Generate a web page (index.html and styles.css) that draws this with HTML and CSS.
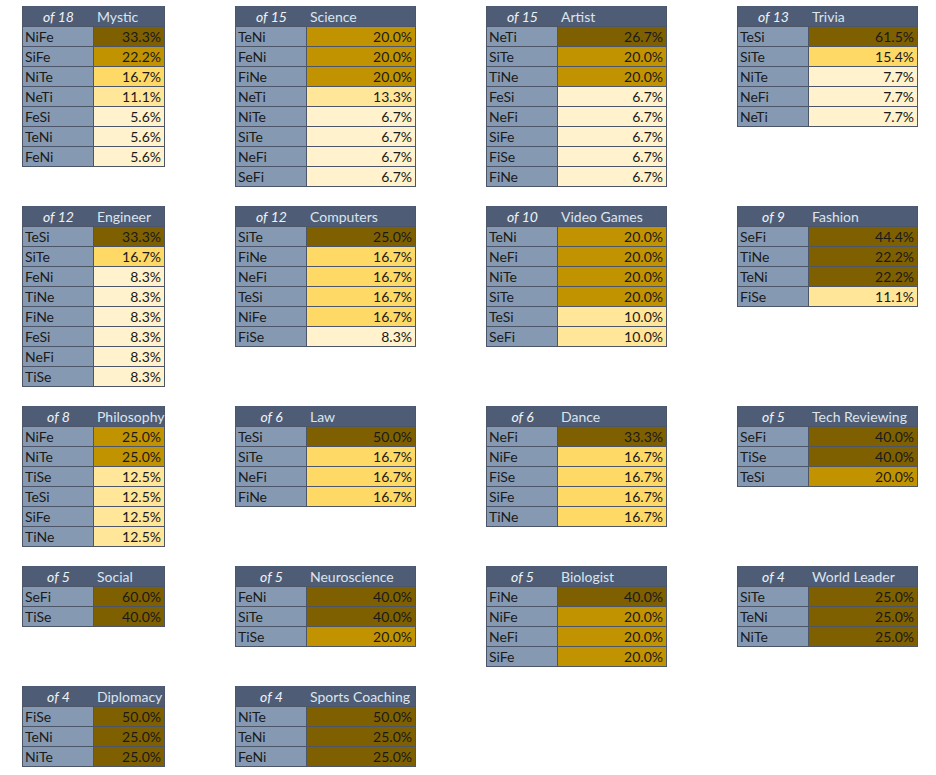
FILE: index.html
```html
<!DOCTYPE html>
<html>
<head>
<meta charset="utf-8">
<link rel="stylesheet" href="styles.css">
</head>
<body>
<div class="board">

<div class="tbl"><div class="hd"><span class="of">of 18</span><span class="ttl">Mystic</span></div>
<div class="row"><span class="lab">NiFe</span><span class="val d">33.3%</span></div>
<div class="row"><span class="lab">SiFe</span><span class="val m">22.2%</span></div>
<div class="row"><span class="lab">NiTe</span><span class="val l">16.7%</span></div>
<div class="row"><span class="lab">NeTi</span><span class="val ll">11.1%</span></div>
<div class="row"><span class="lab">FeSi</span><span class="val x">5.6%</span></div>
<div class="row"><span class="lab">TeNi</span><span class="val x">5.6%</span></div>
<div class="row"><span class="lab">FeNi</span><span class="val x">5.6%</span></div>
</div>

<div class="tbl"><div class="hd"><span class="of">of 15</span><span class="ttl">Science</span></div>
<div class="row"><span class="lab">TeNi</span><span class="val m">20.0%</span></div>
<div class="row"><span class="lab">FeNi</span><span class="val m">20.0%</span></div>
<div class="row"><span class="lab">FiNe</span><span class="val m">20.0%</span></div>
<div class="row"><span class="lab">NeTi</span><span class="val ll">13.3%</span></div>
<div class="row"><span class="lab">NiTe</span><span class="val x">6.7%</span></div>
<div class="row"><span class="lab">SiTe</span><span class="val x">6.7%</span></div>
<div class="row"><span class="lab">NeFi</span><span class="val x">6.7%</span></div>
<div class="row"><span class="lab">SeFi</span><span class="val x">6.7%</span></div>
</div>

<div class="tbl"><div class="hd"><span class="of">of 15</span><span class="ttl">Artist</span></div>
<div class="row"><span class="lab">NeTi</span><span class="val d">26.7%</span></div>
<div class="row"><span class="lab">SiTe</span><span class="val m">20.0%</span></div>
<div class="row"><span class="lab">TiNe</span><span class="val m">20.0%</span></div>
<div class="row"><span class="lab">FeSi</span><span class="val x">6.7%</span></div>
<div class="row"><span class="lab">NeFi</span><span class="val x">6.7%</span></div>
<div class="row"><span class="lab">SiFe</span><span class="val x">6.7%</span></div>
<div class="row"><span class="lab">FiSe</span><span class="val x">6.7%</span></div>
<div class="row"><span class="lab">FiNe</span><span class="val x">6.7%</span></div>
</div>

<div class="tbl"><div class="hd"><span class="of">of 13</span><span class="ttl">Trivia</span></div>
<div class="row"><span class="lab">TeSi</span><span class="val d">61.5%</span></div>
<div class="row"><span class="lab">SiTe</span><span class="val l">15.4%</span></div>
<div class="row"><span class="lab">NiTe</span><span class="val x">7.7%</span></div>
<div class="row"><span class="lab">NeFi</span><span class="val x">7.7%</span></div>
<div class="row"><span class="lab">NeTi</span><span class="val x">7.7%</span></div>
</div>

<div class="tbl"><div class="hd"><span class="of">of 12</span><span class="ttl">Engineer</span></div>
<div class="row"><span class="lab">TeSi</span><span class="val d">33.3%</span></div>
<div class="row"><span class="lab">SiTe</span><span class="val l">16.7%</span></div>
<div class="row"><span class="lab">FeNi</span><span class="val x">8.3%</span></div>
<div class="row"><span class="lab">TiNe</span><span class="val x">8.3%</span></div>
<div class="row"><span class="lab">FiNe</span><span class="val x">8.3%</span></div>
<div class="row"><span class="lab">FeSi</span><span class="val x">8.3%</span></div>
<div class="row"><span class="lab">NeFi</span><span class="val x">8.3%</span></div>
<div class="row"><span class="lab">TiSe</span><span class="val x">8.3%</span></div>
</div>

<div class="tbl"><div class="hd"><span class="of">of 12</span><span class="ttl">Computers</span></div>
<div class="row"><span class="lab">SiTe</span><span class="val d">25.0%</span></div>
<div class="row"><span class="lab">FiNe</span><span class="val l">16.7%</span></div>
<div class="row"><span class="lab">NeFi</span><span class="val l">16.7%</span></div>
<div class="row"><span class="lab">TeSi</span><span class="val l">16.7%</span></div>
<div class="row"><span class="lab">NiFe</span><span class="val l">16.7%</span></div>
<div class="row"><span class="lab">FiSe</span><span class="val x">8.3%</span></div>
</div>

<div class="tbl"><div class="hd"><span class="of">of 10</span><span class="ttl">Video Games</span></div>
<div class="row"><span class="lab">TeNi</span><span class="val m">20.0%</span></div>
<div class="row"><span class="lab">NeFi</span><span class="val m">20.0%</span></div>
<div class="row"><span class="lab">NiTe</span><span class="val m">20.0%</span></div>
<div class="row"><span class="lab">SiTe</span><span class="val m">20.0%</span></div>
<div class="row"><span class="lab">TeSi</span><span class="val ll">10.0%</span></div>
<div class="row"><span class="lab">SeFi</span><span class="val ll">10.0%</span></div>
</div>

<div class="tbl"><div class="hd"><span class="of">of 9</span><span class="ttl">Fashion</span></div>
<div class="row"><span class="lab">SeFi</span><span class="val d">44.4%</span></div>
<div class="row"><span class="lab">TiNe</span><span class="val d">22.2%</span></div>
<div class="row"><span class="lab">TeNi</span><span class="val d">22.2%</span></div>
<div class="row"><span class="lab">FiSe</span><span class="val ll">11.1%</span></div>
</div>

<div class="tbl"><div class="hd"><span class="of">of 8</span><span class="ttl">Philosophy</span></div>
<div class="row"><span class="lab">NiFe</span><span class="val m">25.0%</span></div>
<div class="row"><span class="lab">NiTe</span><span class="val m">25.0%</span></div>
<div class="row"><span class="lab">TiSe</span><span class="val ll">12.5%</span></div>
<div class="row"><span class="lab">TeSi</span><span class="val ll">12.5%</span></div>
<div class="row"><span class="lab">SiFe</span><span class="val ll">12.5%</span></div>
<div class="row"><span class="lab">TiNe</span><span class="val ll">12.5%</span></div>
</div>

<div class="tbl"><div class="hd"><span class="of">of 6</span><span class="ttl">Law</span></div>
<div class="row"><span class="lab">TeSi</span><span class="val d">50.0%</span></div>
<div class="row"><span class="lab">SiTe</span><span class="val l">16.7%</span></div>
<div class="row"><span class="lab">NeFi</span><span class="val l">16.7%</span></div>
<div class="row"><span class="lab">FiNe</span><span class="val l">16.7%</span></div>
</div>

<div class="tbl"><div class="hd"><span class="of">of 6</span><span class="ttl">Dance</span></div>
<div class="row"><span class="lab">NeFi</span><span class="val d">33.3%</span></div>
<div class="row"><span class="lab">NiFe</span><span class="val l">16.7%</span></div>
<div class="row"><span class="lab">FiSe</span><span class="val l">16.7%</span></div>
<div class="row"><span class="lab">SiFe</span><span class="val l">16.7%</span></div>
<div class="row"><span class="lab">TiNe</span><span class="val l">16.7%</span></div>
</div>

<div class="tbl"><div class="hd"><span class="of">of 5</span><span class="ttl">Tech Reviewing</span></div>
<div class="row"><span class="lab">SeFi</span><span class="val d">40.0%</span></div>
<div class="row"><span class="lab">TiSe</span><span class="val d">40.0%</span></div>
<div class="row"><span class="lab">TeSi</span><span class="val m">20.0%</span></div>
</div>

<div class="tbl"><div class="hd"><span class="of">of 5</span><span class="ttl">Social</span></div>
<div class="row"><span class="lab">SeFi</span><span class="val d">60.0%</span></div>
<div class="row"><span class="lab">TiSe</span><span class="val d">40.0%</span></div>
</div>

<div class="tbl"><div class="hd"><span class="of">of 5</span><span class="ttl">Neuroscience</span></div>
<div class="row"><span class="lab">FeNi</span><span class="val d">40.0%</span></div>
<div class="row"><span class="lab">SiTe</span><span class="val d">40.0%</span></div>
<div class="row"><span class="lab">TiSe</span><span class="val m">20.0%</span></div>
</div>

<div class="tbl"><div class="hd"><span class="of">of 5</span><span class="ttl">Biologist</span></div>
<div class="row"><span class="lab">FiNe</span><span class="val d">40.0%</span></div>
<div class="row"><span class="lab">NiFe</span><span class="val m">20.0%</span></div>
<div class="row"><span class="lab">NeFi</span><span class="val m">20.0%</span></div>
<div class="row"><span class="lab">SiFe</span><span class="val m">20.0%</span></div>
</div>

<div class="tbl"><div class="hd"><span class="of">of 4</span><span class="ttl">World Leader</span></div>
<div class="row"><span class="lab">SiTe</span><span class="val d">25.0%</span></div>
<div class="row"><span class="lab">TeNi</span><span class="val d">25.0%</span></div>
<div class="row"><span class="lab">NiTe</span><span class="val d">25.0%</span></div>
</div>

<div class="tbl"><div class="hd"><span class="of">of 4</span><span class="ttl">Diplomacy</span></div>
<div class="row"><span class="lab">FiSe</span><span class="val d">50.0%</span></div>
<div class="row"><span class="lab">TeNi</span><span class="val d">25.0%</span></div>
<div class="row"><span class="lab">NiTe</span><span class="val d">25.0%</span></div>
</div>

<div class="tbl"><div class="hd"><span class="of">of 4</span><span class="ttl">Sports Coaching</span></div>
<div class="row"><span class="lab">NiTe</span><span class="val d">50.0%</span></div>
<div class="row"><span class="lab">TeNi</span><span class="val d">25.0%</span></div>
<div class="row"><span class="lab">FeNi</span><span class="val d">25.0%</span></div>
</div>

</div>
</body>
</html>
```
FILE: styles.css
```css
html, body {
  margin: 0;
  padding: 0;
  background: #ffffff;
}
body {
  font-family: Lato, "Open Sans", sans-serif;
  font-size: 14px;
  color: #1a1a1a;
}
.board {
  display: grid;
  grid-template-columns: 143px 181px 181px 181px;
  column-gap: 70px;
  row-gap: 19px;
  align-items: start;
  padding: 6px 0 0 22px;
}
.tbl {
  border: 1px solid #4d5669;
  border-top: none;
}
.hd, .row {
  display: grid;
  grid-template-columns: 71px 1fr;
  height: 20px;
  box-sizing: border-box;
}
.hd {
  background: #4e5d75;
  border-top: 1px solid #4e5d75;
  line-height: 19px;
}
.row {
  border-top: 1px solid #4d5669;
  line-height: 19px;
}
.of {
  text-align: center;
  font-style: italic;
  color: #eef2f7;
}
.ttl {
  color: #dde4ed;
  padding-left: 3px;
  white-space: nowrap;
}
.lab {
  background: #8699b2;
  border-right: 1px solid #4d5669;
  padding-left: 2px;
}
.val {
  text-align: right;
  padding-right: 3px;
}
.d { background: #7f6000; }
.m { background: #c29300; }
.l { background: #ffd966; }
.ll { background: #ffe699; }
.x { background: #fff2cc; }
```
